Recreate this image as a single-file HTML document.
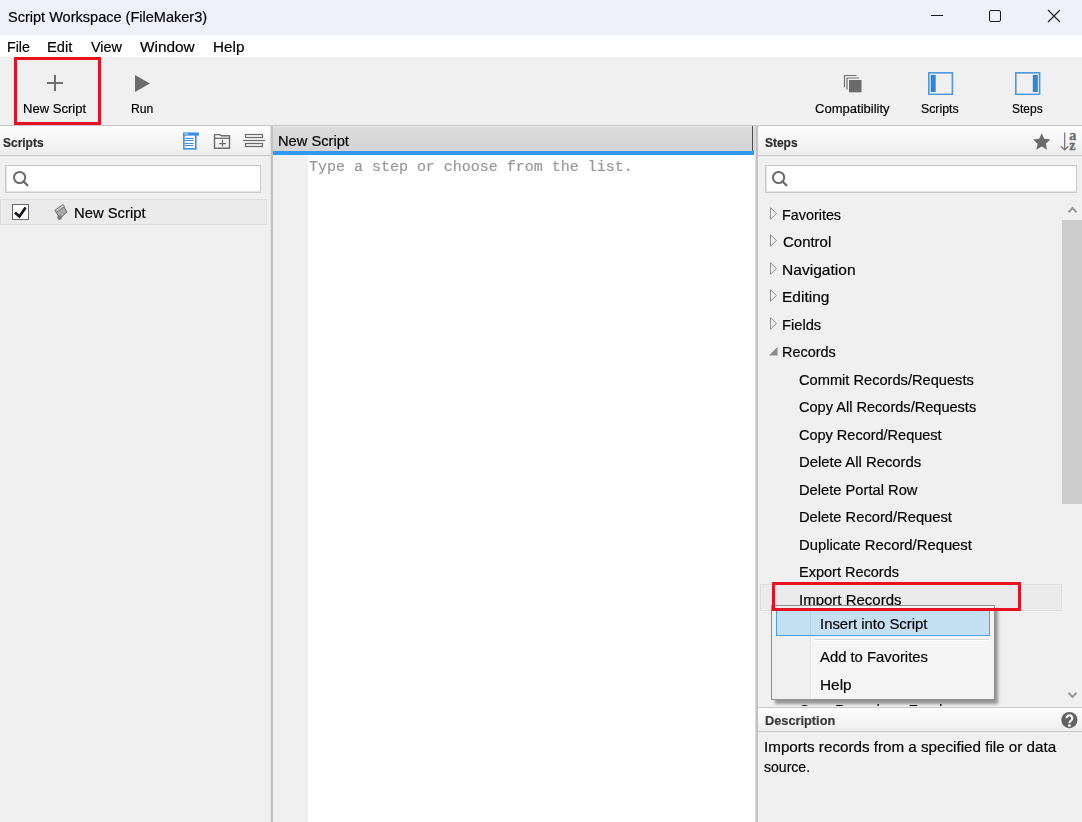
<!DOCTYPE html>
<html><head><meta charset="utf-8">
<style>
*{margin:0;padding:0;box-sizing:border-box}
html,body{width:1082px;height:822px;overflow:hidden;background:#f0f0f0;font-family:"Liberation Sans",sans-serif;color:#000}
.a{position:absolute}
.t{position:absolute;white-space:pre;line-height:1;-webkit-text-stroke:0.2px currentColor}
.hdr{background:linear-gradient(#fefefe,#f8f8f8 40%,#f2f2f2 75%,#ededed)}
</style></head><body>
<div class="a" style="left:0;top:0;width:1082px;height:35px;background:#eef1f9"></div>
<div class="t" style="left:7.60px;top:10px;font-size:14.5px;;transform:scaleX(1.0019);transform-origin:0 0;">Script Workspace (FileMaker3)</div>
<div class="a" style="left:931px;top:15px;width:12px;height:1px;background:#1a1a1a"></div>
<div class="a" style="left:989px;top:10px;width:12px;height:12px;border:1px solid #1a1a1a;border-radius:2px"></div>
<svg class="a" style="left:1047px;top:9px" width="14" height="14" viewBox="0 0 14 14"><path d="M1 1L13 13M13 1L1 13" stroke="#1a1a1a" stroke-width="1.1" fill="none"/></svg>
<div class="a" style="left:0;top:35px;width:1082px;height:22px;background:#fff"></div>
<div class="t" style="left:6.95px;top:39px;font-size:15px;;transform:scaleX(0.9462);transform-origin:0 0;">File</div>
<div class="t" style="left:46.92px;top:39px;font-size:15px;;transform:scaleX(0.9774);transform-origin:0 0;">Edit</div>
<div class="t" style="left:91.30px;top:39px;font-size:15px;;transform:scaleX(0.9627);transform-origin:0 0;">View</div>
<div class="t" style="left:140.00px;top:39px;font-size:15px;;transform:scaleX(1.0258);transform-origin:0 0;">Window</div>
<div class="t" style="left:212.98px;top:39px;font-size:15px;;transform:scaleX(1.0167);transform-origin:0 0;">Help</div>
<div class="a" style="left:0;top:57px;width:1082px;height:68px;background:#f0f0f0"></div>
<div class="a" style="left:0;top:125px;width:1082px;height:1px;background:#c9c9c9"></div>
<div class="a" style="left:47px;top:82px;width:16px;height:2px;background:#707070"></div>
<div class="a" style="left:54px;top:75px;width:2px;height:16px;background:#707070"></div>
<div class="t" style="left:22.60px;top:102px;font-size:13px;;transform:scaleX(1.0026);transform-origin:0 0;">New Script</div>
<svg class="a" style="left:135px;top:75px" width="16" height="17" viewBox="0 0 16 17"><path d="M0 0L15 8.5L0 17Z" fill="#6b6b6b"/></svg>
<div class="t" style="left:130.57px;top:102px;font-size:13px;;transform:scaleX(0.9329);transform-origin:0 0;">Run</div>
<svg class="a" style="left:840px;top:70px" width="26" height="26" viewBox="0 0 26 26">
<path d="M4.5 17V5.5H16.5" fill="none" stroke="#707070" stroke-width="1.2"/>
<path d="M7 19.5V8H19" fill="none" stroke="#707070" stroke-width="1.2"/>
<rect x="9" y="10" width="12.5" height="12.3" fill="#6b6b6b"/>
</svg>
<div class="t" style="left:815.40px;top:102px;font-size:13px;;transform:scaleX(1.0025);transform-origin:0 0;">Compatibility</div>
<svg class="a" style="left:927.5px;top:72px" width="26" height="23" viewBox="0 0 26 23">
<rect x="0.8" y="0.8" width="23.6" height="21.6" fill="none" stroke="#4c97de" stroke-width="1.6"/>
<rect x="2.7" y="2.9" width="5" height="17.1" fill="#2f84d3"/>
</svg>
<div class="t" style="left:921.20px;top:102px;font-size:13px;;transform:scaleX(0.9471);transform-origin:0 0;">Scripts</div>
<svg class="a" style="left:1015px;top:72px" width="26" height="23" viewBox="0 0 26 23">
<rect x="0.8" y="0.8" width="23.8" height="21.6" fill="none" stroke="#4c97de" stroke-width="1.6"/>
<rect x="17.8" y="2.9" width="5" height="17.1" fill="#2f84d3"/>
</svg>
<div class="t" style="left:1012.30px;top:102px;font-size:13px;;transform:scaleX(0.9217);transform-origin:0 0;">Steps</div>
<div class="a hdr" style="left:0;top:126px;width:270px;height:29px"></div>
<div class="a" style="left:0;top:155px;width:270px;height:1px;background:#c6c6c6"></div>
<div class="t" style="left:3.40px;top:137px;font-size:12.5px;font-weight:bold;color:#2e2e2e;transform:scaleX(0.9570);transform-origin:0 0;">Scripts</div>
<svg class="a" style="left:182px;top:132px" width="18" height="18" viewBox="0 0 18 18">
<rect x="1.9" y="1.5" width="11.9" height="15.3" fill="#fff" stroke="#3a90e6" stroke-width="1.6"/>
<rect x="1.2" y="0.6" width="15.8" height="3" fill="#3a90e6"/>
<rect x="2.2" y="1.4" width="4" height="1" fill="#cfe3f8"/>
<path d="M3 6.5H11.5M3 8.5H11.5M3 11.5H11.5M3 13.5H11.5" stroke="#3a90e6" stroke-width="1"/>
</svg>
<svg class="a" style="left:213px;top:133px" width="18" height="17" viewBox="0 0 18 17">
<path d="M1.5 15.3V1.6H6.8L8.3 2.8H16.5V15.3Z" fill="none" stroke="#6b6b6b" stroke-width="1.4" stroke-linejoin="round"/>
<path d="M1.5 5.3H16.5" stroke="#6b6b6b" stroke-width="1.3"/>
<path d="M9.5 6.8V13.6M6.1 10.5H12.9" stroke="#6b6b6b" stroke-width="1.25"/>
</svg>
<svg class="a" style="left:243px;top:133px" width="22" height="16" viewBox="0 0 22 16">
<rect x="2.5" y="1.5" width="17" height="3" fill="none" stroke="#6b6b6b" stroke-width="1.2"/>
<path d="M0 7.5H22" stroke="#6b6b6b" stroke-width="1.2"/>
<rect x="2.5" y="10.5" width="17" height="3" fill="none" stroke="#6b6b6b" stroke-width="1.2"/>
</svg>
<div class="a" style="left:5px;top:165px;width:256px;height:28px;background:#fff;border:1px solid #cacaca;box-shadow:inset 1px -1px 0 #e4e4e4"></div>
<svg class="a" style="left:12px;top:170px" width="18" height="18" viewBox="0 0 18 18">
<circle cx="7.6" cy="7.5" r="5.6" fill="none" stroke="#6b6b6b" stroke-width="2"/>
<path d="M11.6 11.5L15.4 15.3" stroke="#6b6b6b" stroke-width="2.3" stroke-linecap="round"/>
</svg>
<div class="a" style="left:0;top:199px;width:267px;height:26px;background:#ebebeb;border:1px solid #dcdcdc"></div>
<div class="a" style="left:12px;top:204px;width:17px;height:16px;background:#fff;border:1px solid #6a6a6a"></div>
<svg class="a" style="left:12px;top:204px" width="17" height="16" viewBox="0 0 17 16"><path d="M3 8.4L7.4 12.4L13.6 3.4" fill="none" stroke="#15151f" stroke-width="2.7"/></svg>
<svg class="a" style="left:48px;top:200px" width="24" height="24" viewBox="0 0 24 24">
<path d="M7 10.5L15 5.5L19 12L12 18.5Z" fill="#a9a9a9" stroke="#6f6f6f" stroke-width="1"/>
<circle cx="11.6" cy="17.6" r="2.3" fill="#7a7a7a"/>
<path d="M6.8 10.4L14.6 4.8A1.5 1.5 0 0 1 16.2 6.8L8.6 12.2Z" fill="#d0d0d0" stroke="#6f6f6f" stroke-width="1"/>
</svg>
<div class="t" style="left:73.81px;top:205px;font-size:15px;;transform:scaleX(0.9869);transform-origin:0 0;">New Script</div>
<div class="a" style="left:270px;top:126px;width:1px;height:696px;background:#dedede"></div>
<div class="a" style="left:271px;top:126px;width:2px;height:696px;background:#c2c2c2"></div>
<div class="a" style="left:273px;top:126px;width:482px;height:25px;background:linear-gradient(#e4e4e4,#e4e4e4 1px,#dbdbdb 2px,#d4d4d4)"></div>
<div class="a" style="left:752px;top:126px;width:1px;height:29px;background:#505050"></div>
<div class="a" style="left:273px;top:151px;width:481px;height:4px;background:#3197fb"></div>
<div class="t" style="left:277.92px;top:133px;font-size:15px;;transform:scaleX(0.9772);transform-origin:0 0;">New Script</div>
<div class="a" style="left:273px;top:155px;width:35px;height:667px;background:#f0f0f0"></div>
<div class="a" style="left:308px;top:155px;width:447px;height:667px;background:#fff"></div>
<div class="t" style="left:309.00px;top:160px;font-size:14.9px;font-family:'Liberation Mono',monospace;color:#999999;transform:scaleX(1.0061);transform-origin:0 0;">Type a step or choose from the list.</div>
<div class="a" style="left:755px;top:126px;width:1px;height:696px;background:#dedede"></div>
<div class="a" style="left:756px;top:126px;width:2px;height:696px;background:#c2c2c2"></div>
<div class="a hdr" style="left:758px;top:126px;width:324px;height:29px"></div>
<div class="a" style="left:758px;top:155px;width:324px;height:1px;background:#c6c6c6"></div>
<div class="t" style="left:764.70px;top:137px;font-size:12.5px;font-weight:bold;color:#2e2e2e;transform:scaleX(0.9564);transform-origin:0 0;">Steps</div>
<svg class="a" style="left:1030px;top:130px" width="24" height="24" viewBox="0 0 24 24"><path d="M11.70 3.18 L14.23 8.82 L20.37 9.48 L15.79 13.63 L17.06 19.68 L11.70 16.60 L6.34 19.68 L7.61 13.63 L3.03 9.48 L9.17 8.82Z" fill="#6b6b6b"/></svg>
<svg class="a" style="left:1058px;top:130px" width="24" height="22" viewBox="0 0 24 22">
<path d="M6.7 2.5V19.5M3 16.3L6.7 19.9L10.4 16.3" fill="none" stroke="#707070" stroke-width="1.2"/>
<text x="11.2" y="9.8" font-family="Liberation Serif" font-weight="bold" font-size="14" fill="#6b6b6b" stroke="#6b6b6b" stroke-width="0.35">a</text>
<text x="11.3" y="19.8" font-family="Liberation Serif" font-weight="bold" font-size="14" fill="#6b6b6b" stroke="#6b6b6b" stroke-width="0.35">z</text>
</svg>
<div class="a" style="left:765px;top:165px;width:312px;height:28px;background:#fff;border:1px solid #cacaca;box-shadow:inset 1px -1px 0 #e4e4e4"></div>
<svg class="a" style="left:771px;top:170px" width="18" height="18" viewBox="0 0 18 18">
<circle cx="7.6" cy="7.5" r="5.6" fill="none" stroke="#6b6b6b" stroke-width="2"/>
<path d="M11.6 11.5L15.4 15.3" stroke="#6b6b6b" stroke-width="2.3" stroke-linecap="round"/>
</svg>
<div class="a" style="left:758px;top:199px;width:324px;height:507px;overflow:hidden">
<svg class="a" style="left:12px;top:8px" width="8" height="13" viewBox="0 0 8 13"><path d="M0.5 0.7L6.3 6.5L0.5 12.3Z" fill="none" stroke="#8f8f8f" stroke-width="1"/></svg>
<div class="t" style="left:23.64px;top:8px;font-size:15px;;transform:scaleX(0.9571);transform-origin:0 0;">Favorites</div>
<svg class="a" style="left:12px;top:35px" width="8" height="13" viewBox="0 0 8 13"><path d="M0.5 0.7L6.3 6.5L0.5 12.3Z" fill="none" stroke="#8f8f8f" stroke-width="1"/></svg>
<div class="t" style="left:24.60px;top:35px;font-size:15px;;transform:scaleX(0.9975);transform-origin:0 0;">Control</div>
<svg class="a" style="left:12px;top:63px" width="8" height="13" viewBox="0 0 8 13"><path d="M0.5 0.7L6.3 6.5L0.5 12.3Z" fill="none" stroke="#8f8f8f" stroke-width="1"/></svg>
<div class="t" style="left:23.56px;top:63px;font-size:15px;;transform:scaleX(1.0383);transform-origin:0 0;">Navigation</div>
<svg class="a" style="left:12px;top:90px" width="8" height="13" viewBox="0 0 8 13"><path d="M0.5 0.7L6.3 6.5L0.5 12.3Z" fill="none" stroke="#8f8f8f" stroke-width="1"/></svg>
<div class="t" style="left:23.57px;top:90px;font-size:15px;;transform:scaleX(1.0332);transform-origin:0 0;">Editing</div>
<svg class="a" style="left:12px;top:118px" width="8" height="13" viewBox="0 0 8 13"><path d="M0.5 0.7L6.3 6.5L0.5 12.3Z" fill="none" stroke="#8f8f8f" stroke-width="1"/></svg>
<div class="t" style="left:23.62px;top:118px;font-size:15px;;transform:scaleX(0.9789);transform-origin:0 0;">Fields</div>
<svg class="a" style="left:11px;top:148px" width="9" height="9" viewBox="0 0 9 9"><path d="M8.5 0V8.5H0Z" fill="#8a8a8a"/></svg>
<div class="t" style="left:23.64px;top:145px;font-size:15px;;transform:scaleX(0.9622);transform-origin:0 0;">Records</div>
<div class="a" style="left:2px;top:385px;width:302px;height:27px;background:#ebebeb;border:1px solid #dedede"></div>
<div class="t" style="left:41.30px;top:173px;font-size:15px;;transform:scaleX(0.9752);transform-origin:0 0;">Commit Records/Requests</div>
<div class="t" style="left:41.30px;top:200px;font-size:15px;;transform:scaleX(0.9704);transform-origin:0 0;">Copy All Records/Requests</div>
<div class="t" style="left:41.30px;top:228px;font-size:15px;;transform:scaleX(0.9663);transform-origin:0 0;">Copy Record/Request</div>
<div class="t" style="left:41.11px;top:255px;font-size:15px;;transform:scaleX(0.9909);transform-origin:0 0;">Delete All Records</div>
<div class="t" style="left:41.12px;top:283px;font-size:15px;;transform:scaleX(0.9796);transform-origin:0 0;">Delete Portal Row</div>
<div class="t" style="left:41.12px;top:310px;font-size:15px;;transform:scaleX(0.9804);transform-origin:0 0;">Delete Record/Request</div>
<div class="t" style="left:41.11px;top:338px;font-size:15px;;transform:scaleX(0.9873);transform-origin:0 0;">Duplicate Record/Request</div>
<div class="t" style="left:41.03px;top:365px;font-size:15px;;transform:scaleX(0.9669);transform-origin:0 0;">Export Records</div>
<div class="t" style="left:41.00px;top:393px;font-size:15px;;transform:scaleX(0.9997);transform-origin:0 0;">Import Records</div>
<div class="t" style="left:41.00px;top:420px;font-size:15px;;">New Record/Request</div>
<div class="t" style="left:42.00px;top:448px;font-size:15px;;">Open Record/Request</div>
<div class="t" style="left:41.00px;top:475px;font-size:15px;;">Revert Record/Request</div>
<div class="t" style="left:42.00px;top:503px;font-size:15px;;transform:scaleX(0.9177);transform-origin:0 0;">Save Records as Excel</div>
<div class="a" style="left:304px;top:0;width:20px;height:508px;background:#f0f0f0"></div>
<svg class="a" style="left:308px;top:6px" width="13" height="10" viewBox="0 0 13 10"><path d="M2.5 7.3L6.5 3L10.5 7.3" fill="none" stroke="#9a9a9a" stroke-width="2"/></svg>
<div class="a" style="left:304px;top:21px;width:20px;height:284px;background:#cdcdcd"></div>
<svg class="a" style="left:308px;top:491px" width="13" height="10" viewBox="0 0 13 10"><path d="M2.5 2.7L6.5 7L10.5 2.7" fill="none" stroke="#9a9a9a" stroke-width="2"/></svg>
</div>
<div class="a" style="left:758px;top:707px;width:324px;height:1px;background:#cacaca"></div>
<div class="a hdr" style="left:758px;top:708px;width:324px;height:23px"></div>
<div class="a" style="left:758px;top:731px;width:324px;height:1px;background:#c6c6c6"></div>
<div class="t" style="left:765.00px;top:715px;font-size:12.7px;font-weight:bold;color:#3a3a3a;transform:scaleX(1.0066);transform-origin:0 0;">Description</div>
<svg class="a" style="left:1060.5px;top:711.5px" width="17" height="17" viewBox="0 0 17 17"><circle cx="8.4" cy="8.1" r="8.1" fill="#626262"/><path d="M5.5 6.3A2.9 2.9 0 1 1 10.3 8.4Q8.4 9.5 8.4 11.2" fill="none" stroke="#fff" stroke-width="2.1"/><rect x="7.2" y="12.4" width="2.4" height="2.3" fill="#fff"/></svg>
<div class="t" style="left:763.89px;top:739px;font-size:15px;;transform:scaleX(1.0128);transform-origin:0 0;">Imports records from a specified file or data</div>
<div class="t" style="left:764.40px;top:759px;font-size:15px;;transform:scaleX(0.9371);transform-origin:0 0;">source.</div>
<div class="a" style="left:775px;top:609px;width:223px;height:95px;background:rgba(0,0,0,0.38);filter:blur(1.8px)"></div>
<div class="a" style="left:771px;top:605px;width:224px;height:95px;background:#f5f5f5;border:1px solid #8e8e8e"></div>
<div class="a" style="left:772px;top:606px;width:38px;height:93px;background:#f0f0f0"></div>
<div class="a" style="left:810px;top:606px;width:1px;height:93px;background:#e2e2e2"></div>
<div class="a" style="left:811px;top:606px;width:1px;height:93px;background:#fff"></div>
<div class="a" style="left:776px;top:610px;width:214px;height:26px;background:#c4e0f2;border:1px solid #4aa0e8"></div>
<div class="a" style="left:810px;top:611px;width:1px;height:24px;background:#b5d3ea"></div>
<div class="a" style="left:814px;top:639px;width:175px;height:1px;background:#dcdcdc"></div>
<div class="a" style="left:814px;top:640px;width:175px;height:1px;background:#fff"></div>
<div class="t" style="left:819.51px;top:616px;font-size:15px;;transform:scaleX(0.9907);transform-origin:0 0;">Insert into Script</div>
<div class="t" style="left:820.20px;top:649px;font-size:15px;;transform:scaleX(0.9879);transform-origin:0 0;">Add to Favorites</div>
<div class="t" style="left:819.98px;top:677px;font-size:15px;;transform:scaleX(1.0235);transform-origin:0 0;">Help</div>
<div class="a" style="left:14px;top:57px;width:87px;height:68px;border:3px solid #e81123"></div>
<div class="a" style="left:772px;top:582px;width:249px;height:29px;border:3px solid #e81123"></div>
</body></html>
